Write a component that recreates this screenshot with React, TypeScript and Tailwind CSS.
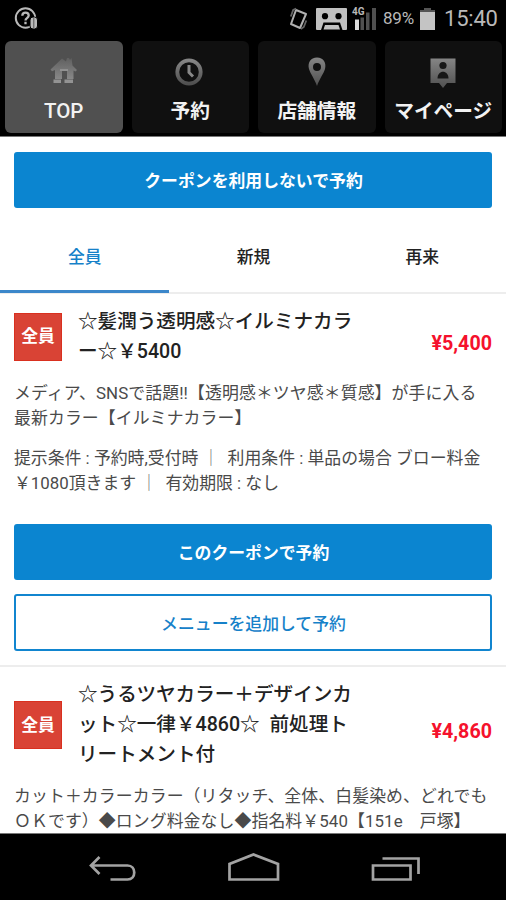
import clsx from 'clsx';
import type { ReactNode } from 'react';

interface Coupon {
   title: string[];
   price: string;
   texts: string[][];
   actions?: boolean;
}

const coupons: Coupon[] = [
   {
      title: ['☆髪潤う透明感☆イルミナカラ', 'ー☆￥5400'],
      price: '¥5,400',
      texts: [
         ['メディア、SNSで話題!!【透明感＊ツヤ感＊質感】が手に入る', '最新カラー【イルミナカラー】'],
         [
            '提示条件 : 予約時,受付時 ｜ 利用条件 : 単品の場合 ブロー料金',
            '￥1080頂きます ｜ 有効期限 : なし',
         ],
      ],
      actions: true,
   },
   {
      title: ['☆うるツヤカラー＋デザインカ', 'ット☆一律￥4860☆  前処理ト', 'リートメント付'],
      price: '¥4,860',
      texts: [
         [
            'カット＋カラーカラー（リタッチ、全体、白髪染め、どれでも',
            'ＯＫです）◆ロング料金なし◆指名料￥540【151e　戸塚】',
         ],
      ],
   },
];

function StatusBar() {
   return (
      <header className="flex h-[37px] items-center bg-black pr-2 pl-[14px] text-[#b9b9b9]">
         <svg width="24" height="24" viewBox="0 0 24 24" fill="none" stroke="currentColor">
            <circle cx="11.5" cy="11" r="9.7" strokeWidth="2" />
            <path d="M8.3 8.7c.2-4.200 6.400-4 6.400-.2 0 2.600-3.200 2.700-3.200 5M11.500 14.800v2.400" strokeWidth="2.300" />
            <rect x="16" y="10" width="7.5" height="12" rx="3" fill="currentColor" stroke="#000" />
            <path d="M19.8 11v10" stroke="#555" />
         </svg>
         <svg className="ml-auto" width="21" height="24" viewBox="0 0 21 24" fill="none">
            <path d="m8 3 10 4-6 14-9-4z" stroke="#b0b0b0" strokeWidth="2" strokeLinejoin="round" />
            <path d="M2.800 9.500 5.200 3l3-1.500M18.300 13.500 15.800 20l-3 2" stroke="#666" strokeWidth="1.8" />
         </svg>
         <svg className="ml-[7px]" width="31" height="22" viewBox="0 0 31 22">
            <rect width="31" height="22" rx="1" fill="#c0c0c0" />
            <circle cx="9" cy="8.2" r="3.1" fill="#000" />
            <circle cx="22.5" cy="8.2" r="3.1" fill="#000" />
            <path fill="#000" d="M7.500 14.500h16.500l2.500 7.500H5Z" />
            <path fill="#c0c0c0" d="M9 17h13.500l1.500 4.500H7.500Z" />
         </svg>
         <div className="relative ml-[5px] h-[23px] w-[25px]">
            <svg width="25" height="23" viewBox="0 0 25 23">
               <path fill="#ddd" d="M3 12.500h4V23H3z" />
               <path fill="#505050" d="M8.500 10.500h3.500V23H8.500zM14 5.500h3.500V23H14zM20 1h4v22h-4z" />
            </svg>
            <span className="absolute -top-px left-0 font-[Roboto] text-[10px] leading-[11px] font-bold">
               4G
            </span>
         </div>
         <span className="mt-px ml-[6px] w-[32px] font-[Roboto] text-[17px] tracking-[-0.200px] whitespace-nowrap">
            89%
         </span>
         <svg className="ml-[5px]" width="15" height="22" viewBox="0 0 15 22" fill="#c4c4c4">
            <path fill="#555" d="M4 0h7v2h4v3H0V2h4z" />
            <path d="M0 4h15v18H0z" />
         </svg>
         <span className="ml-[9px] w-[54px] font-[Roboto] text-[22px] tracking-[-0.200px] whitespace-nowrap">
            15:40
         </span>
      </header>
   );
}

function NavItem({ label, active, children }: { label: string; active?: boolean; children: ReactNode }) {
   return (
      <button
         className={clsx(
            'flex h-[92px] flex-col items-center rounded-md pt-[15px]',
            active ? 'bg-[#505050]' : 'bg-[#101010]',
         )}
      >
         <svg width="32" height="32" viewBox="0 0 32 32">
            {children}
         </svg>
         <span
            className={clsx(
               'leading-[30px] whitespace-nowrap text-[#f2f2f2]',
               active ? 'mt-[8px] text-[20.500px] font-medium' : 'mt-[9px] text-[19.700px] font-bold',
            )}
         >
            {label}
         </span>
      </button>
   );
}

function Nav() {
   return (
      <nav className="h-[100px] border-b border-[#777] bg-black pt-1 pr-1 pl-[5px]">
         <svg width="0" height="0" className="absolute">
            <linearGradient id="metal" x1="0" y1="0" x2="0" y2="1">
               <stop offset="0" stopColor="#606060" />
               <stop offset="1" stopColor="#888" />
            </linearGradient>
            <linearGradient id="pin" x1="0" y1="0" x2="0" y2="1">
               <stop offset="0" stopColor="#858585" />
               <stop offset="1" stopColor="#505050" />
            </linearGradient>
         </svg>
         <div className="grid grid-cols-4 gap-[9px]">
            <NavItem label="TOP" active>
               <path
                  fill="url(#metal)"
                  d="M2.500 13.500 14 2.500l4 3 1-3.500h2l1 2 1.500-2 1 7.500 4.500 4.500-1.500 1.500-2-1V23h-6.500v-8h-5v8H7v-9l-3 1.200Z"
               />
               <path fill="#939393" d="M5.500 23.500H13V27H5.500zM16.500 23.500H25V27h-8.500z" />
               <path d="M12 14h8" stroke="#9a9a9a" strokeWidth="1.5" />
            </NavItem>
            <NavItem label="予約">
               <circle cx="15" cy="16" r="11.700" fill="none" stroke="url(#pin)" strokeWidth="3.800" />
               <path d="M15 9v7.500l4 4" fill="none" stroke="#888" strokeWidth="3" />
            </NavItem>
            <NavItem label="店舗情報">
               <path
                  fill="url(#pin)"
                  fillRule="evenodd"
                  d="M16 1.500C9.500 1.500 6.300 7 8 13c1.400 5 5.500 9.500 8 17 2.500-7.500 6.600-12 8-17 1.700-6-1.500-11.500-8-11.500Zm0 5.500a4 4 0 1 1 0 8 4 4 0 0 1 0-8Z"
               />
            </NavItem>
            <NavItem label="マイページ">
               <path fill="url(#pin)" d="M3.500 2.500h25V27H20l-4 5-4-5H3.500Z" />
               <circle cx="16" cy="9.500" r="3.600" fill="#171717" />
               <path fill="#171717" d="M10.500 22.500c0-9 11-9 11 0Z" />
            </NavItem>
         </div>
      </nav>
   );
}

function Button({ children, outline }: { children: ReactNode; outline?: boolean }) {
   return (
      <button
         className={clsx(
            'flex w-full items-center justify-center rounded-[3px] border-[#1185cf] pt-[3px] pl-px text-[16.850px]',
            outline ? 'h-[57px] border-2 bg-white font-medium text-[#1681c9]' : 'h-14 bg-[#0b85d0] font-bold text-white',
         )}
      >
         {children}
      </button>
   );
}

function Lines({ items }: { items: string[] }) {
   return items.map((line) => (
      <span key={line} className="block whitespace-pre">
         {line.split('｜').map((part, i) => (
            <span key={part}>
               {i > 0 && <span className="mr-[4px] text-[#777]">｜</span>}
               {part}
            </span>
         ))}
      </span>
   ));
}

function CouponItem({ coupon }: { coupon: Coupon }) {
   return (
      <article className="border-b-2 border-[#ededed] px-[14px] pt-[13px] pb-[14px]">
         <div className="flex items-center">
            <span className="flex size-12 shrink-0 items-center justify-center border border-[#d9301f] bg-[#d94335] text-[16.800px] font-bold text-white">
               全員
            </span>
            <h2 className="ml-4 text-[19.600px] leading-[30px] font-medium text-[#222]">
               <Lines items={coupon.title} />
            </h2>
            <span className="mt-[14px] ml-auto font-[Roboto] text-[19.700px] font-bold text-[#f5112c]">
               {coupon.price}
            </span>
         </div>
         {coupon.texts.map((text, i) => (
            <p
               key={text[0]}
               className={clsx(
                  'mt-[14px] text-[16.870px] leading-[25.300px] text-[#4a4a4a]',
                  i === 0 && 'tracking-[0.100px]',
               )}
            >
               <Lines items={text} />
            </p>
         ))}
         {coupon.actions && (
            <div className="mt-[28px] flex flex-col gap-[14px]">
               <Button>このクーポンで予約</Button>
               <Button outline>メニューを追加して予約</Button>
            </div>
         )}
      </article>
   );
}

function SystemBar() {
   return (
      <footer className="h-[67px] shrink-0 border-t border-[#777] bg-black">
         <svg width="506" height="66" viewBox="0 834 506 66" fill="none" stroke="#a3a3a3" strokeWidth="2.700">
            <path d="m99.500 857-8.500 8.500 8.500 8.500M91 865.500h36.500c9 0 9 14 0 14h-17" />
            <path d="M229.500 879.500v-15.500l24-9.500 24.500 9.500v15.500Z" />
            <path d="M373 865.500h37.500v14H373ZM382.500 858.500H418.500V874" />
         </svg>
      </footer>
   );
}

export default function App() {
   return (
      <div className="flex h-[900px] w-[506px] flex-col overflow-hidden bg-white font-[Roboto,'Noto_Sans_CJK_JP',sans-serif]">
         <StatusBar />
         <Nav />
         <main className="min-h-0 flex-1 overflow-hidden">
            <div className="px-[14px] pt-[15px]">
               <Button>クーポンを利用しないで予約</Button>
            </div>
            <div className="mt-[12px] grid h-[74px] grid-cols-3 border-b-2 border-[#ededed] text-[16.800px] font-medium text-[#222]">
               {['全員', '新規', '再来'].map((tab, i) => (
                  <button
                     key={tab}
                     className={clsx(
                        'h-[73px] border-b-[3px] pt-[5px] pl-px',
                        i === 0 ? 'border-[#3b87ca] text-[#1681c9]' : 'border-transparent',
                     )}
                  >
                     {tab}
                  </button>
               ))}
            </div>
            {coupons.map((coupon) => (
               <CouponItem key={coupon.price} coupon={coupon} />
            ))}
         </main>
         <SystemBar />
      </div>
   );
}
